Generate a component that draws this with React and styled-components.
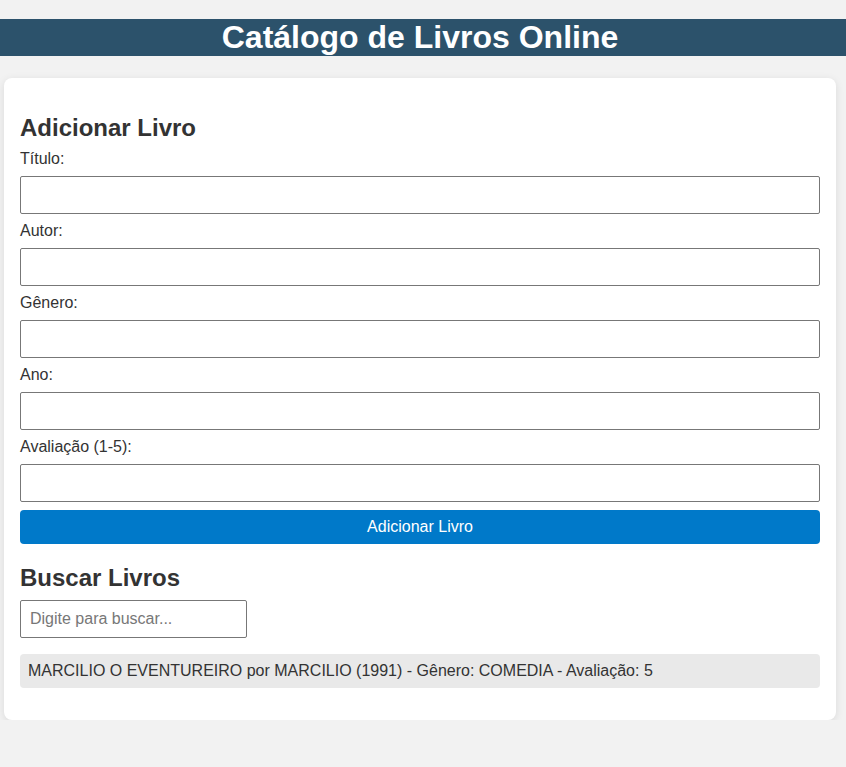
import React, { useState } from "react"
import styled, { createGlobalStyle } from "styled-components"

const GlobalStyle = createGlobalStyle`
  body {
    margin: 0;
    background: #f2f2f2;
    color: #333;
    font-family: "Liberation Sans", Arial, sans-serif;
  }
`

const livros = [
  {
    titulo: "MARCILIO O EVENTUREIRO",
    autor: "MARCILIO",
    ano: 1991,
    genero: "COMEDIA",
    avaliacao: 5,
  },
]

const App = () => {
  const [busca, setBusca] = useState("")
  const filtrados = livros.filter((l) =>
    l.titulo.toLowerCase().includes(busca.toLowerCase())
  )

  return (
    <>
      <GlobalStyle />
      <Header>Catálogo de Livros Online</Header>
      <Container>
        <Title>Adicionar Livro</Title>
        <Form onSubmit={(e) => e.preventDefault()}>
          <label htmlFor="titulo">Título:</label>
          <Input id="titulo" type="text" />
          <label htmlFor="autor">Autor:</label>
          <Input id="autor" type="text" />
          <label htmlFor="genero">Gênero:</label>
          <Input id="genero" type="text" />
          <label htmlFor="ano">Ano:</label>
          <Input id="ano" type="text" />
          <label htmlFor="avaliacao">Avaliação (1-5):</label>
          <Input id="avaliacao" type="text" />
          <Button type="submit">Adicionar Livro</Button>
        </Form>

        <Title>Buscar Livros</Title>
        <Input
          type="text"
          placeholder="Digite para buscar..."
          value={busca}
          onChange={(e) => setBusca(e.target.value)}
          $small
        />
        <List>
          {filtrados.map((l, i) => (
            <Item key={i}>
              {l.titulo} por {l.autor} ({l.ano}) - Gênero: {l.genero} - Avaliação:{" "}
              {l.avaliacao}
            </Item>
          ))}
        </List>
      </Container>
    </>
  )
}

const Header = styled.h1`
  margin: 19px 0 22px;
  padding-right: 6px;
  background: #2c526b;
  color: #fff;
  text-align: center;
  font-size: 32px;
  line-height: 37px;
`

const Container = styled.main`
  width: 800px;
  margin-left: 4px;
  padding: 16px;
  background: #fff;
  border-radius: 8px;
  box-shadow: 0 2px 8px rgba(0, 0, 0, 0.1);
`

const Title = styled.h2`
  margin: 20px 0 8px;
  font-size: 24px;
  line-height: 28px;
`

const Form = styled.form`
  display: flex;
  flex-direction: column;
  gap: 8px;
  font-size: 16px;
  line-height: 18px;
`

const Input = styled.input`
  box-sizing: border-box;
  width: ${(p) => (p.$small ? "227px" : "100%")};
  height: 38px;
  padding: 0 9px;
  border: 1px solid #777;
  border-radius: 2px;
  font-family: inherit;
  font-size: 16px;
  color: #333;
  background: #fff;
  &::placeholder {
    color: #777;
  }
`

const Button = styled.button`
  height: 34px;
  border: none;
  border-radius: 4px;
  background: #0079c9;
  color: #fff;
  font-family: inherit;
  font-size: 16px;
  cursor: pointer;
`

const List = styled.ul`
  list-style: none;
  margin: 16px 0;
  padding: 0;
`

const Item = styled.li`
  padding: 8px;
  background: #e9e9e9;
  border-radius: 4px;
  font-size: 16px;
  line-height: 18px;
`

export default App
